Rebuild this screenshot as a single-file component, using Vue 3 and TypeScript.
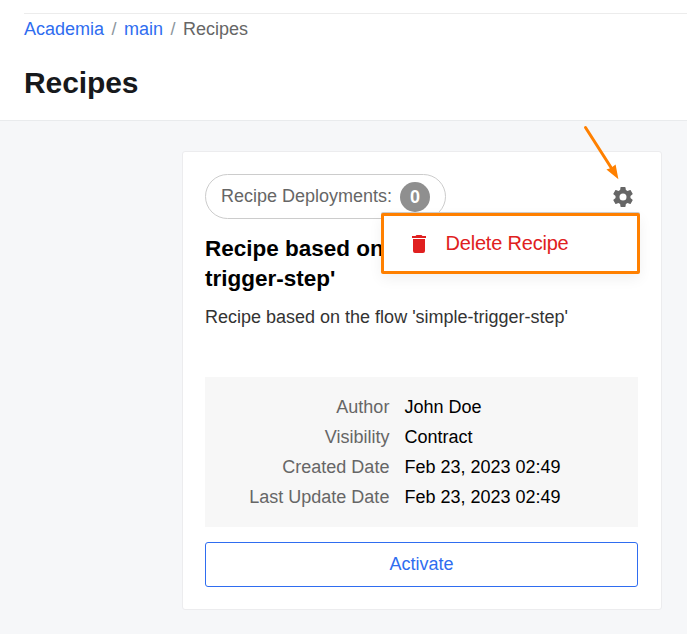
<script setup lang="ts">
interface Detail {
  label: string
  value: string
}

const deployments = 0

const details: Detail[] = [
  { label: 'Author', value: 'John Doe' },
  { label: 'Visibility', value: 'Contract' },
  { label: 'Created Date', value: 'Feb 23, 2023 02:49' },
  { label: 'Last Update Date', value: 'Feb 23, 2023 02:49' },
]
</script>

<template>
  <div class="page">
    <header class="header">
      <nav class="breadcrumbs">
        <a class="crumb-link">Academia</a>
        <span class="slash">/</span>
        <a class="crumb-link">main</a>
        <span class="slash">/</span>
        <span class="crumb-current">Recipes</span>
      </nav>
      <h1 class="title">Recipes</h1>
    </header>

    <main class="content">
      <article class="card">
        <div class="card-top">
          <div class="chip">
            <span class="chip-label">Recipe Deployments:</span>
            <span class="badge">{{ deployments }}</span>
          </div>
          <button class="gear" aria-label="Settings">
            <svg viewBox="0 0 24 24" width="24" height="24">
              <path
                fill="#666"
                d="M12 15.5A3.5 3.5 0 0 1 8.5 12 3.5 3.5 0 0 1 12 8.5a3.5 3.5 0 0 1 3.5 3.5 3.5 3.5 0 0 1-3.5 3.5m7.43-2.53c.04-.32.07-.64.07-.97s-.03-.66-.07-1l2.11-1.63c.19-.15.24-.42.12-.64l-2-3.46c-.12-.22-.39-.31-.61-.22l-2.49 1c-.52-.39-1.06-.73-1.69-.98l-.37-2.65A.506.506 0 0 0 14 2h-4c-.25 0-.46.18-.5.42l-.37 2.65c-.63.25-1.17.59-1.69.98l-2.49-1c-.22-.09-.49 0-.61.22l-2 3.46c-.13.22-.07.49.12.64L4.57 11c-.04.34-.07.67-.07 1s.03.65.07.97l-2.11 1.66c-.19.15-.25.42-.12.64l2 3.46c.12.22.39.3.61.22l2.49-1.01c.52.4 1.06.74 1.69.99l.37 2.65c.04.24.25.42.5.42h4c.25 0 .46-.18.5-.42l.37-2.65c.63-.26 1.17-.59 1.69-.99l2.49 1.01c.22.08.49 0 .61-.22l2-3.46c.12-.22.07-.49-.12-.64z"
              />
            </svg>
          </button>

          <div class="menu">
            <svg class="trash" viewBox="0 0 24 24" width="24" height="24">
              <path
                fill="#e02020"
                d="M19 4h-3.5l-1-1h-5l-1 1H5v2h14M6 19a2 2 0 0 0 2 2h8a2 2 0 0 0 2-2V7H6z"
              />
            </svg>
            <span class="menu-text">Delete Recipe</span>
          </div>
        </div>

        <h2 class="card-title">Recipe based on<br />trigger-step'</h2>
        <p class="description">Recipe based on the flow 'simple-trigger-step'</p>

        <dl class="details">
          <div v-for="item in details" :key="item.label" class="detail-row">
            <dt>{{ item.label }}</dt>
            <dd>{{ item.value }}</dd>
          </div>
        </dl>

        <button class="activate">Activate</button>
      </article>
    </main>

    <svg class="pointer" viewBox="0 0 40 60" width="40" height="60">
      <line x1="5.5" y1="7.5" x2="32" y2="49" stroke="#ff8000" stroke-width="3" stroke-linecap="round" />
      <path fill="#ff8000" d="M38.4 59.3 26.4 49.6 31 48 35.6 44.4z" />
    </svg>
  </div>
</template>

<style>
body {
  margin: 0;
  overflow: hidden;
  background: #f6f7f9;
}
</style>

<style scoped>
.page {
  position: relative;
  box-sizing: border-box;
  width: 687px;
  height: 634px;
  overflow: hidden;
  background: #f6f7f9;
  font-family: "Liberation Sans", Arial, sans-serif;
  font-size: 18px;
  color: #000;
}

.header {
  box-sizing: border-box;
  height: 121px;
  padding: 13px 0 0 24px;
  background: #fff;
  border-bottom: 1px solid #e9ebed;
}

.breadcrumbs {
  display: flex;
  gap: 7.5px;
  height: 30px;
  line-height: 30px;
  border-top: 1px solid #ececec;
}

.crumb-link {
  color: #2f6df0;
}

.slash {
  color: #8c959d;
}

.crumb-current {
  color: #666;
}

.title {
  margin: 20px 0 0;
  font-size: 30px;
  line-height: 38px;
  letter-spacing: -0.1px;
  color: #17191c;
}

.content {
  padding: 30px 25px 0 182px;
}

.card {
  box-sizing: border-box;
  width: 480px;
  height: 459px;
  padding: 22px 23px 22px 22px;
  background: #fff;
  border: 1px solid #ececee;
  border-radius: 3px;
}

.card-top {
  position: relative;
  display: flex;
  justify-content: space-between;
  align-items: center;
  height: 45px;
}

.chip {
  box-sizing: border-box;
  display: flex;
  align-items: center;
  justify-content: space-between;
  width: 241px;
  height: 45px;
  padding: 0 15px;
  border: 1px solid #ccc;
  border-radius: 23px;
}

.chip-label {
  color: #666;
}

.badge {
  width: 30px;
  height: 30px;
  border-radius: 50%;
  background: #8f8f8f;
  color: #fff;
  font-size: 18px;
  font-weight: 700;
  line-height: 30px;
  text-align: center;
}

.gear {
  display: flex;
  margin: 1px 3px 0 0;
  padding: 0;
  background: none;
  border: 0;
}

.menu {
  position: absolute;
  top: 39px;
  right: -2px;
  z-index: 1;
  box-sizing: border-box;
  display: flex;
  align-items: center;
  gap: 15px;
  width: 259px;
  height: 61px;
  padding-left: 22.5px;
  background: #fff;
  border: 3px solid #ff8000;
  border-radius: 2px;
  box-shadow: 0 -1px 0 #ccc, 0 5px 14px rgba(0, 0, 0, 0.06);
}

.menu-text {
  color: #e02020;
  font-size: 20px;
  letter-spacing: -0.2px;
}

.card-title {
  margin: 15px 0 0;
  font-size: 22.5px;
  line-height: 30px;
}

.description {
  margin: 8px 0 0;
  line-height: 30px;
  color: #333;
}

.details {
  box-sizing: border-box;
  display: flex;
  flex-direction: column;
  height: 150px;
  margin: 45px 0 15px;
  padding: 15px 0;
  background: #f7f7f7;
}

.detail-row {
  display: grid;
  grid-template-columns: 184.4px 1fr;
  gap: 15px;
  line-height: 30px;
}

.detail-row dt {
  color: #666;
  text-align: right;
}

.detail-row dd {
  margin: 0;
}

.activate {
  display: block;
  box-sizing: border-box;
  width: 100%;
  height: 45px;
  padding: 0;
  background: #fff;
  border: 1px solid #2f6df0;
  border-radius: 3px;
  color: #2f6df0;
  font: inherit;
}

.pointer {
  position: absolute;
  left: 580px;
  top: 120px;
  z-index: 2;
}
</style>
